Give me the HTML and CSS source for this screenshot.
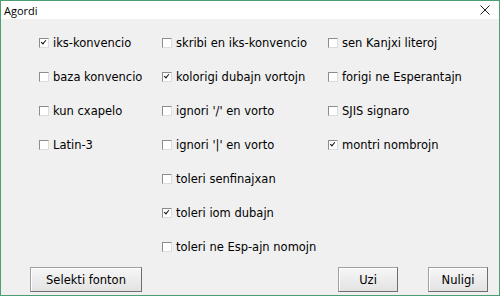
FILE: index.html
```html
<!DOCTYPE html>
<html lang="eo">
<head>
    <meta charset="UTF-8">
    <title>Agordi</title>
    <link rel="stylesheet" href="styles.css">
</head>
<body>
    <div class="window">
        <div class="titlebar">
            <span class="title">Agordi</span>
            <svg class="close" width="10" height="10" viewBox="0 0 10 10">
                <path d="M0.5 0.5 L9.5 9.5 M9.5 0.5 L0.5 9.5" stroke="#222" stroke-width="1"/>
            </svg>
        </div>
        <div class="content">
            <div class="options">
                <label class="opt"><span class="box checked"></span>iks-konvencio</label>
                <label class="opt"><span class="box"></span>skribi en iks-konvencio</label>
                <label class="opt"><span class="box"></span>sen Kanjxi literoj</label>

                <label class="opt"><span class="box"></span>baza konvencio</label>
                <label class="opt"><span class="box checked"></span>kolorigi dubajn vortojn</label>
                <label class="opt"><span class="box"></span>forigi ne Esperantajn</label>

                <label class="opt"><span class="box"></span>kun cxapelo</label>
                <label class="opt"><span class="box"></span>ignori '/' en vorto</label>
                <label class="opt"><span class="box"></span>SJIS signaro</label>

                <label class="opt"><span class="box"></span>Latin-3</label>
                <label class="opt"><span class="box"></span>ignori '|' en vorto</label>
                <label class="opt"><span class="box checked"></span>montri nombrojn</label>

                <span></span>
                <label class="opt"><span class="box"></span>toleri senfinajxan</label>
                <span></span>

                <span></span>
                <label class="opt"><span class="box checked"></span>toleri iom dubajn</label>
                <span></span>

                <span></span>
                <label class="opt"><span class="box"></span>toleri ne Esp-ajn nomojn</label>
                <span></span>
            </div>
            <div class="buttons">
                <button class="btn btn-font">Selekti fonton</button>
                <span class="spacer"></span>
                <button class="btn">Uzi</button>
                <button class="btn">Nuligi</button>
            </div>
        </div>
    </div>
</body>
</html>
```

FILE: styles.css
```css
html, body {
    margin: 0;
    padding: 0;
}
body {
    width: 500px;
    height: 296px;
    background: #f0f0f0;
    font-family: "DejaVu Sans", Verdana, sans-serif;
    font-size: 11.5px;
    color: #000;
}
.window {
    box-sizing: border-box;
    width: 500px;
    height: 296px;
    border: 1px solid #4c9f70;
    background: #f0f0f0;
    display: flex;
    flex-direction: column;
}
.titlebar {
    height: 18px;
    background: #ffffff;
    display: flex;
    align-items: center;
    justify-content: space-between;
    padding: 0 9px 0 3px;
}
.title {
    font-family: "Open Sans", "Noto Sans", sans-serif;
    font-size: 11px;
    color: #000;
}
.close {
    display: block;
}
.content {
    flex: 1;
    display: flex;
    flex-direction: column;
    padding: 7px 0 0 38px;
}
.options {
    display: grid;
    grid-template-columns: 123px 166px auto;
    grid-auto-rows: 34px;
}
.opt {
    display: flex;
    align-items: center;
    white-space: nowrap;
}
.box {
    box-sizing: border-box;
    width: 10px;
    height: 10px;
    margin-right: 4px;
    border: 1px solid #8c8c8c;
    border-right-color: #dcdcdc;
    border-bottom-color: #dcdcdc;
    background: #ffffff;
    position: relative;
}
.box.checked::after {
    content: "";
    position: absolute;
    left: 2px;
    top: 0px;
    width: 2px;
    height: 4px;
    border: solid #111;
    border-width: 0 1.5px 1.5px 0;
    transform: rotate(40deg);
}
.buttons {
    display: flex;
    align-items: center;
    margin-top: 3px;
    margin-left: -9px;
    padding-right: 11px;
    gap: 30px;
}
.spacer {
    flex: 1;
}
.btn {
    box-sizing: border-box;
    height: 25px;
    width: 60px;
    font-family: "DejaVu Sans", Verdana, sans-serif;
    font-size: 11.5px;
    color: #000;
    background: linear-gradient(#f6f6f6, #e3e3e3);
    border: 1px solid #a0a0a0;
    border-right-color: #6e6e6e;
    border-bottom-color: #6e6e6e;
    box-shadow: inset 1px 1px 0 #ffffff;
    padding: 0;
}
.btn-font {
    width: 112px;
}
```
